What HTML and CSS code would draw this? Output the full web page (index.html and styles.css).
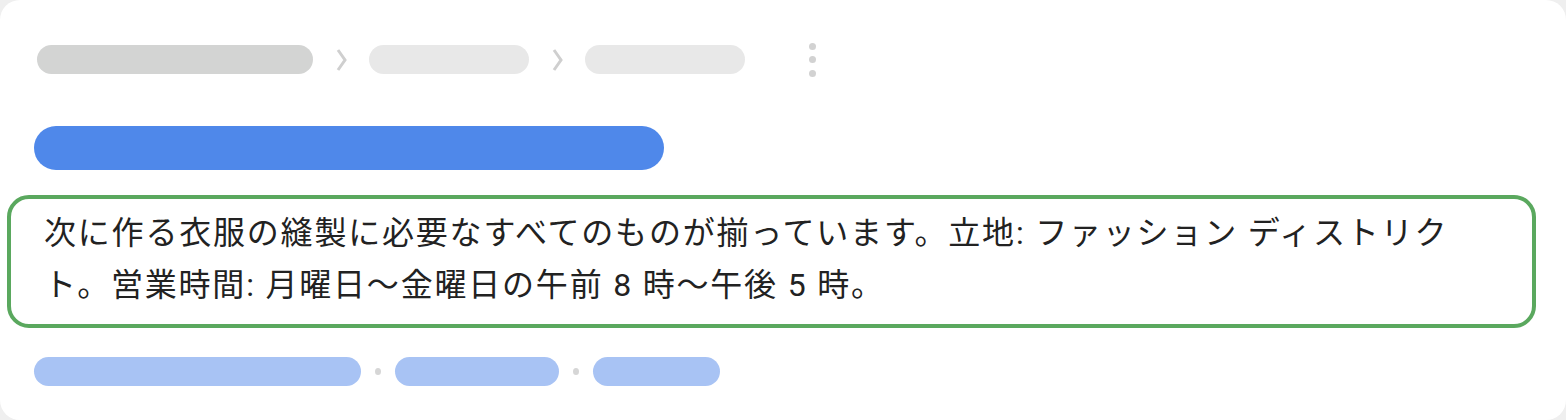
FILE: index.html
```html
<!DOCTYPE html>
<html lang="ja">
<head>
  <meta charset="UTF-8" />
  <meta name="viewport" content="width=device-width, initial-scale=1.0"/>
  <title>検索結果プレビュー</title>
  <link rel="stylesheet" href="styles.css">
</head>
<body>
  <div class="card">
    <div class="crumbs">
      <span class="pill pill-dark w-276"></span>
      <svg class="chev" width="12" height="24" viewBox="0 0 12 24"><polyline points="3,2 10,12 3,22" /></svg>
      <span class="pill pill-light w-160"></span>
      <svg class="chev" width="12" height="24" viewBox="0 0 12 24"><polyline points="3,2 10,12 3,22" /></svg>
      <span class="pill pill-light w-160"></span>
      <span class="kebab"><i></i><i></i><i></i></span>
    </div>
    <div class="title"></div>
    <div class="snippet">
      <p>次に作る衣服の縫製に必要なすべてのものが揃っています。立地: ファッション ディストリクト。営業時間: 月曜日～金曜日の午前 8 時～午後 5 時。</p>
    </div>
    <div class="tags">
      <span class="tag w-327"></span>
      <span class="dot"></span>
      <span class="tag w-164"></span>
      <span class="dot"></span>
      <span class="tag w-127"></span>
    </div>
  </div>
</body>
</html>
```

FILE: styles.css
```css
body{margin:0;background:#efefef;font-family:Roboto,"Noto Sans CJK JP",sans-serif;}
.card{background:#fff;height:420px;border-radius:20px;padding:45px 30px 0 7px;box-sizing:border-box;}

/* breadcrumb row */
.crumbs{display:flex;align-items:center;gap:22px;margin-left:30px;height:29px;}
.pill{display:block;height:29px;border-radius:15px;}
.pill-dark{background:#d3d4d3;}
.pill-light{background:#e8e8e8;}
.w-276{width:276px;}
.w-160{width:160px;}
.chev{fill:none;stroke:#cfcfcf;stroke-width:3;}
.kebab{display:flex;flex-direction:column;gap:6.5px;margin-left:42px;}
.kebab i{display:block;width:7px;height:7px;border-radius:50%;background:#d2d2d2;}

/* title bar */
.title{width:630px;height:44px;background:#4f88ea;border-radius:22px;margin:52px 0 0 27px;}

/* snippet box */
.snippet{margin-top:25px;border:4px solid #5aa85e;border-radius:22px;padding:8px 56px 14px 33px;height:133px;box-sizing:border-box;}
.snippet p{margin:0;font-size:32px;letter-spacing:1.8px;line-height:52px;color:#222;}

/* tags row */
.tags{display:flex;align-items:center;gap:14px;margin:29px 0 0 27px;}
.tag{display:block;height:29px;border-radius:15px;background:#a8c3f4;}
.w-327{width:327px;}
.w-164{width:164px;}
.w-127{width:127px;}
.dot{display:block;width:6px;height:7px;border-radius:50%;background:#d6d6d6;}
```
